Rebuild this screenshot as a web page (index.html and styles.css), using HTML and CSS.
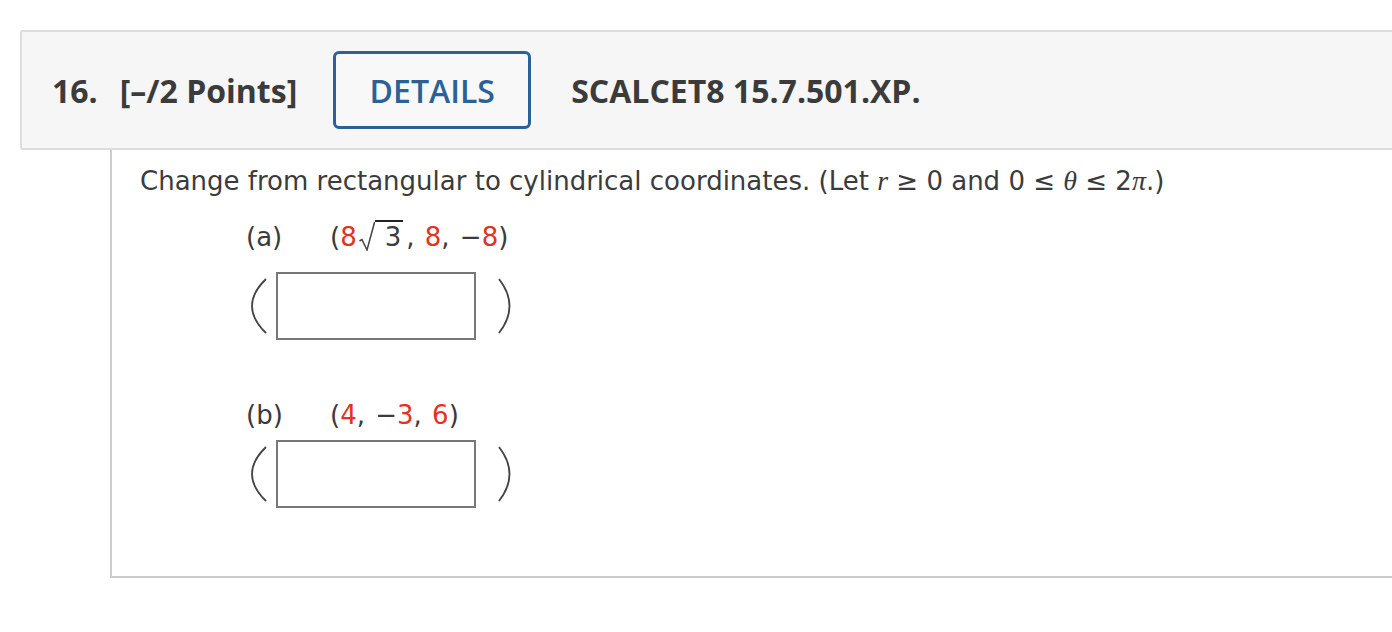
FILE: index.html
```html
<!DOCTYPE html>
<html>
<head>
<meta charset="utf-8">
<link rel="stylesheet" href="styles.css">
</head>
<body>
<div class="page">
  <div class="question">
    <div class="qhead">
      <span class="qnum">16.</span>
      <span class="qpts">[–/2 Points]</span>
      <button class="details">DETAILS</button>
      <span class="qref">SCALCET8 15.7.501.XP.</span>
    </div>
    <div class="qbody">
      <p class="prompt">Change from rectangular to cylindrical coordinates. (Let <i class="mv">r</i> ≥ 0 and 0 ≤ <i class="mv">θ</i> ≤ 2<i class="mv">π</i>.)</p>

      <div class="part part-a">
        <div class="part-row">
          <span class="plabel">(a)</span>
          <span class="pval">(<span class="red">8</span><svg class="rsign" width="18" height="30" viewBox="0 0 18 30"><path d="M2.5 20 L5 18.6 L10 29 L17.6 1" fill="none" stroke="#444" stroke-width="1.5" stroke-linejoin="miter"/></svg><span class="radicand">3</span>, <span class="red">8</span>, −<span class="red">8</span>)</span>
        </div>
        <div class="answer">
          <svg class="paren" width="17" height="56" viewBox="0 0 17 56"><path d="M16 1 Q-12 28 16 55" fill="none" stroke="#444" stroke-width="1.8"/></svg>
          <input class="ans" type="text">
          <svg class="paren" width="14" height="56" viewBox="0 0 14 56"><path d="M1 1 Q22 28 1 55" fill="none" stroke="#444" stroke-width="1.8"/></svg>
        </div>
      </div>

      <div class="part part-b">
        <div class="part-row">
          <span class="plabel">(b)</span>
          <span class="pval">(<span class="red">4</span>, −<span class="red">3</span>, <span class="red">6</span>)</span>
        </div>
        <div class="answer">
          <svg class="paren" width="17" height="56" viewBox="0 0 17 56"><path d="M16 1 Q-12 28 16 55" fill="none" stroke="#444" stroke-width="1.8"/></svg>
          <input class="ans" type="text">
          <svg class="paren" width="14" height="56" viewBox="0 0 14 56"><path d="M1 1 Q22 28 1 55" fill="none" stroke="#444" stroke-width="1.8"/></svg>
        </div>
      </div>
    </div>
  </div>
</div>
</body>
</html>
```
FILE: styles.css
```css
html, body {
  margin: 0;
  padding: 0;
  background: #ffffff;
  overflow: hidden;
}
.page {
  padding: 30px 0 0 20px;
}
.question {
  width: 1400px;
}
.qhead {
  display: flex;
  align-items: center;
  height: 116px;
  background: #f6f6f6;
  border: 2px solid #dddddd;
  border-radius: 3px;
  padding-left: 30px;
  font-family: "Open Sans", sans-serif;
  font-weight: 700;
  font-size: 32px;
  color: #3b3b3b;
}
.qnum {
  margin-right: 22px;
}
.qpts {
  margin-right: 36px;
}
.details {
  box-sizing: border-box;
  width: 198px;
  height: 78px;
  margin-right: 40px;
  padding: 0;
  background: #f8f8f8;
  border: 3px solid #2b6295;
  border-radius: 6px;
  font-family: "Open Sans", sans-serif;
  font-weight: 600;
  font-size: 32px;
  color: #2b6295;
}
.qbody {
  box-sizing: border-box;
  margin-left: 90px;
  height: 428px;
  border-left: 2px solid #cccccc;
  border-bottom: 2px solid #cccccc;
  padding: 16px 0 0 28px;
  font-family: "DejaVu Sans", Verdana, sans-serif;
  font-size: 26px;
  color: #3b3b3b;
}
.prompt {
  margin: 0;
  line-height: 30px;
}
.mv {
  font-family: "Liberation Serif", "Times New Roman", serif;
  font-style: italic;
  font-size: 28px;
}
.part {
  padding-left: 106px;
}
.part-row {
  display: flex;
  align-items: baseline;
  line-height: 30px;
  margin-top: 25px;
}
.plabel {
  width: 84px;
}
.pval {
  word-spacing: 2px;
}
.red {
  color: #e3321f;
}
.rsign {
  vertical-align: -5px;
}
.radicand {
  border-top: 2px solid #222;
  padding: 0 2px 0 10px;
  margin-right: 3px;
}
.answer {
  display: flex;
  align-items: center;
  margin-top: 20px;
  margin-left: 4px;
}
.paren {
  display: block;
}
.ans {
  box-sizing: border-box;
  width: 200px;
  height: 68px;
  margin: 0 22px 0 9px;
  border: 2px solid #777777;
  border-radius: 0;
  background: #ffffff;
  padding: 0;
}
.part-b .part-row {
  margin-top: 60px;
}
.part-b .answer {
  margin-top: 10px;
}
```
